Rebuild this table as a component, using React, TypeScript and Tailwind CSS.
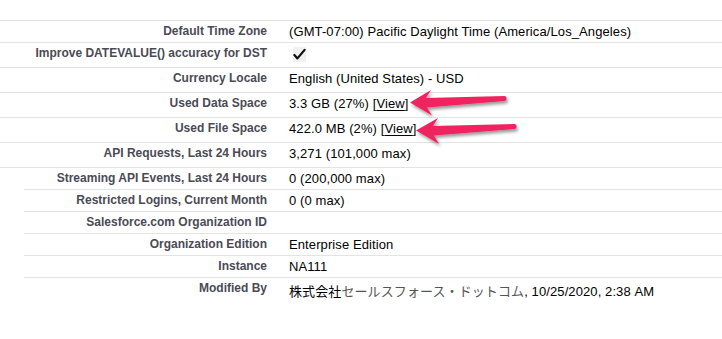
import React from 'react'

type Row = {
  label: string
  value: React.ReactNode
  tall?: boolean
  inset?: boolean
}

function CheckMark() {
  return (
    <div className="mt-[1px] ml-[4px] flex h-[15px] w-[13px] items-center justify-center bg-[#f1f1f1]">
      <svg viewBox="0 0 14 14" className="h-[13px] w-[13px]" aria-hidden="true">
        <path
          d="M1.5 7.5 L4.8 11.2 L12.5 2"
          fill="none"
          stroke="#111"
          strokeWidth="2.4"
          strokeLinecap="round"
          strokeLinejoin="round"
        />
      </svg>
    </div>
  )
}

function ViewLink() {
  return (
    <>
      [<span className="underline underline-offset-[2px]">View</span>]
    </>
  )
}

const rows: Row[] = [
  {
    label: 'Default Time Zone',
    value: '(GMT-07:00) Pacific Daylight Time (America/Los_Angeles)',
  },
  { label: 'Improve DATEVALUE() accuracy for DST', value: <CheckMark />, tall: true },
  { label: 'Currency Locale', value: 'English (United States) - USD', tall: true },
  {
    label: 'Used Data Space',
    value: (
      <>
        3.3 GB (27%) <ViewLink />
      </>
    ),
    tall: true,
  },
  {
    label: 'Used File Space',
    value: (
      <>
        422.0 MB (2%) <ViewLink />
      </>
    ),
    tall: true,
  },
  { label: 'API Requests, Last 24 Hours', value: '3,271 (101,000 max)', tall: true },
  { label: 'Streaming API Events, Last 24 Hours', value: '0 (200,000 max)', inset: true },
  { label: 'Restricted Logins, Current Month', value: '0 (0 max)', inset: true },
  { label: 'Salesforce.com Organization ID', value: '', inset: true },
  { label: 'Organization Edition', value: 'Enterprise Edition', inset: true },
  { label: 'Instance', value: 'NA111', inset: true },
]

function DetailRow({ label, value, tall, inset }: Row) {
  return (
    <div
      className={
        'flex items-start border-b border-[#e3e3e3] pt-[3px] ' +
        (tall ? 'h-[25px] ' : 'h-[22px] ') +
        (inset ? 'ml-[24px]' : '')
      }
    >
      <div
        className={
          'shrink-0 pr-[12px] text-right text-[12px] leading-[14px] font-bold text-[#4a4a56] ' +
          (inset ? 'w-[255px]' : 'w-[279px]')
        }
      >
        {label}
      </div>
      <div className="pl-[10px] text-[13px] leading-[15px] tracking-[0.1px] text-black">{value}</div>
    </div>
  )
}

// pink call-out arrows pointing at the [View] links
function Arrows() {
  return (
    <svg
      className="pointer-events-none absolute top-0 left-0 h-[339px] w-[722px]"
      viewBox="0 0 722 339"
      aria-hidden="true"
    >
      <defs>
        <filter id="arrowShadow" x="-10%" y="-50%" width="130%" height="200%">
          <feDropShadow dx="1.5" dy="2.5" stdDeviation="1.6" floodColor="#000" floodOpacity="0.4" />
        </filter>
      </defs>
      <g fill="#f0245e" filter="url(#arrowShadow)">
        <path d="M410 102.5 L431 90 L426 98 L505 96 Q508.5 98.5 505 101 L427 107.5 L432 115.5 Z" />
        <path d="M416 130.5 L438 118 L433 126 L515 124 Q518.5 126.5 515 129 L434 135.5 L439 144 Z" />
      </g>
    </svg>
  )
}

export default function App() {
  return (
    <div className="relative h-[339px] w-[722px] overflow-hidden bg-white font-['Liberation_Sans','Noto_Sans_CJK_JP',Arial,sans-serif]">
      <div className="h-[20px]" />
      <div className="border-t border-[#e3e3e3]">
        {rows.map((row) => (
          <DetailRow key={row.label} {...row} />
        ))}
        <div className="ml-[24px] flex items-start pt-[3px]">
          <div className="w-[255px] shrink-0 pr-[12px] text-right text-[12px] leading-[14px] font-bold text-[#4a4a56]">
            Modified By
          </div>
          <div className="pt-[3px] pl-[10px] text-[13px] leading-[15px] tracking-[0.1px] text-black">
            株式会社<span className="text-[#555]">セールスフォース・ドットコム</span>, 10/25/2020, 2:38 AM
          </div>
        </div>
      </div>
      <Arrows />
    </div>
  )
}
